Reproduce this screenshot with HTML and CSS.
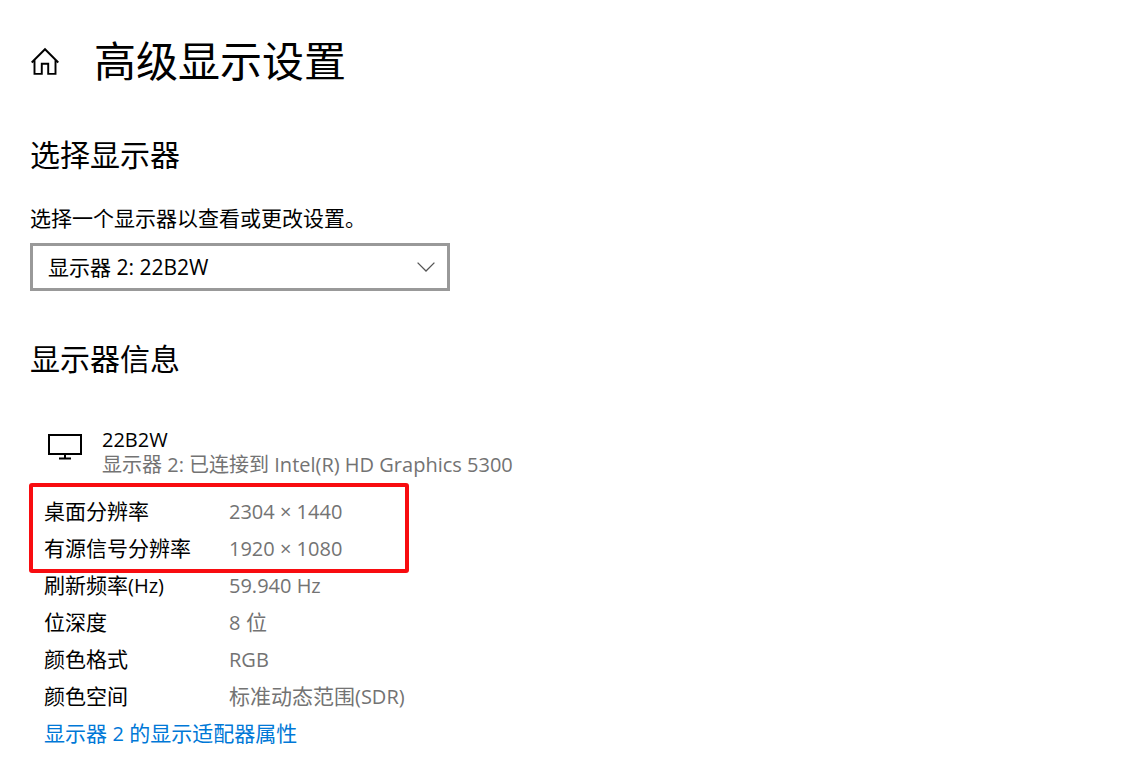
FILE: index.html
```html
<!DOCTYPE html>
<html lang="zh-CN">
	<head>
		<meta charset="UTF-8">
		<title>高级显示设置</title>
		<link rel="stylesheet" href="styles.css">
	</head>
	<body>
		<main class="page">
			<header class="header">
				<svg class="home" viewBox="0 0 28 28" aria-hidden="true">
					<path d="M1.6 15.4 14 3l12.4 12.4M4.2 13V26H11V16.6h6V26h6.8V13"/>
				</svg>
				<h1>高级显示设置</h1>
			</header>
			<section class="choose">
				<h2>选择显示器</h2>
				<label for="monitor">选择一个显示器以查看或更改设置。</label>
				<div class="select-box">
					<select id="monitor">
						<option>显示器 2: 22B2W</option>
					</select>
					<svg class="arrow" viewBox="0 0 18 10" aria-hidden="true">
						<path d="M.6.6 9 9 17.4.6"/>
					</svg>
				</div>
			</section>
			<section class="info">
				<h2>显示器信息</h2>
				<div class="device">
					<svg class="screen" viewBox="0 0 34 26" aria-hidden="true">
						<path d="M1 1h32v19H1zM17 20v4.6M11 24.6h12"/>
					</svg>
					<div class="text">
						<p>22B2W</p>
						<p class="desc">显示器 2: 已连接到 Intel(R) HD Graphics 5300</p>
					</div>
				</div>
				<dl class="list">
					<!-- 红框标出的两行分辨率 -->
					<div class="mark">
						<div class="row"><dt>桌面分辨率</dt><dd><span class="en">2304 × 1440</span></dd></div>
						<div class="row"><dt>有源信号分辨率</dt><dd><span class="en">1920 × 1080</span></dd></div>
					</div>
					<div class="row"><dt>刷新频率<span class="en">(Hz)</span></dt><dd><span class="en">59.940 Hz</span></dd></div>
					<div class="row"><dt>位深度</dt><dd><span class="en">8</span> 位</dd></div>
					<div class="row"><dt>颜色格式</dt><dd><span class="en">RGB</span></dd></div>
					<div class="row"><dt>颜色空间</dt><dd>标准动态范围<span class="en">(SDR)</span></dd></div>
				</dl>
				<a class="link" href="#">显示器 <span class="en">2</span> 的显示适配器属性</a>
			</section>
		</main>
	</body>
</html>
```
FILE: styles.css
```css
*{
	margin: 0;
	padding: 0;
	box-sizing: border-box;
}
body{
	background: #fff;
	color: #000;
	font-family: "Open Sans", "Noto Sans CJK SC", sans-serif;
	font-size: 21px;
	line-height: 26px;
}
svg{
	fill: none;
	stroke: #000;
	stroke-width: 2;
}
.page{
	padding: 31px 30px 6px;
}
.header{
	display: flex;
	align-items: center;
	gap: 34px;
}
.home{
	width: 30px;
	height: 30px;
	stroke-width: 1.8;
}
h1{
	font-size: 42px;
	font-weight: normal;
	line-height: 60px;
}
h2{
	font-size: 30px;
	font-weight: normal;
	line-height: 40px;
}
.choose{
	margin-top: 44px;
}
.choose label{
	display: block;
	margin-top: 30px;
}
.select-box{
	position: relative;
	max-width: 420px;
	margin-top: 12px;
}
.select-box select{
	display: block;
	width: 100%;
	height: 48px;
	padding: 0 50px 0 15px;
	border: 3px solid #999;
	border-radius: 0;
	background: #fff;
	color: #000;
	font: inherit;
	appearance: none;
}
.arrow{
	position: absolute;
	top: 19px;
	right: 15px;
	width: 18px;
	height: 10px;
	stroke: #555;
	stroke-width: 1.3;
	pointer-events: none;
}
.info{
	margin-top: 48px;
}
.device{
	display: flex;
	gap: 20px;
	margin-top: 48px;
	padding-left: 18px;
}
.screen{
	width: 34px;
	height: 26px;
	margin-top: 7px;
}
.text{
	font-size: 20px;
	line-height: 25px;
}
.desc, dd{
	color: #737373;
}
.en{
	font-size: 20px;
}
.list{
	margin-top: 16px;
	padding-left: 14px;
}
.row{
	display: grid;
	grid-template-columns: 185px 1fr;
	line-height: 37px;
}
.mark{
	position: relative;
}
.mark::after{
	content: "";
	position: absolute;
	top: -10px;
	left: -15px;
	width: 380px;
	height: 90px;
	border: 4px solid #f80c10;
	border-radius: 3px;
	box-sizing: border-box;
	pointer-events: none;
}
.link{
	display: block;
	padding-left: 14px;
	color: #0078d7;
	line-height: 37px;
	text-decoration: none;
}
```
